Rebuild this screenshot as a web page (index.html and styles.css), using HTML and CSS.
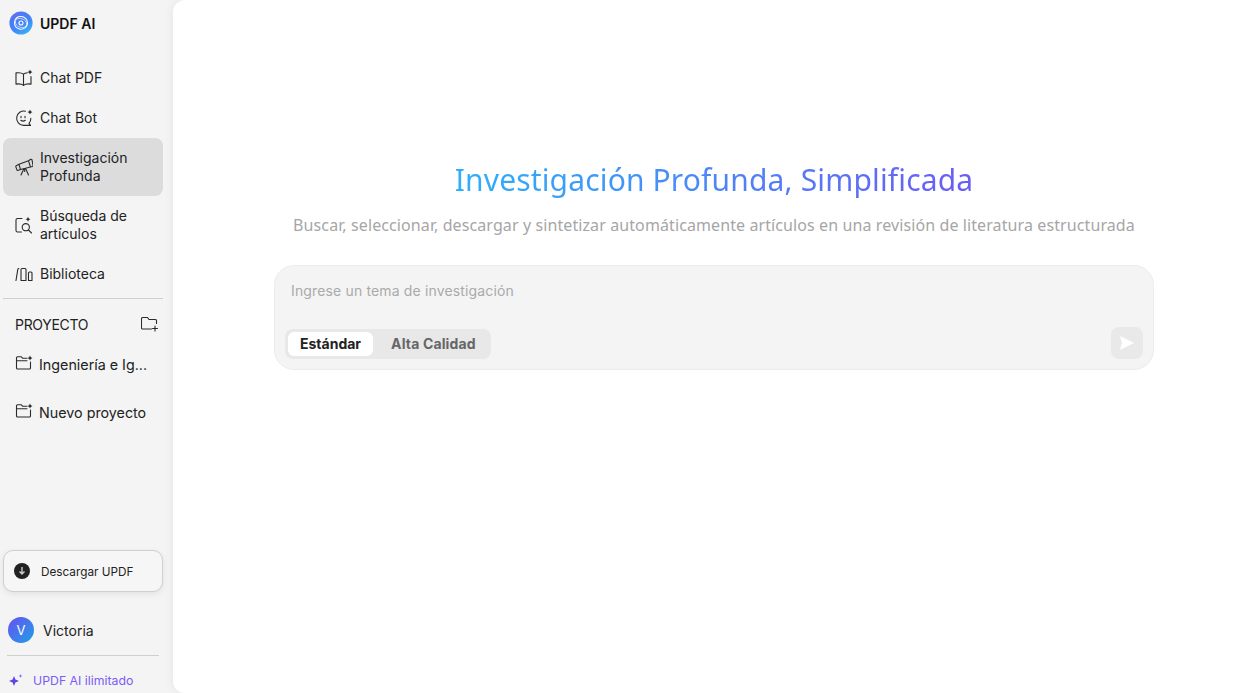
FILE: index.html
```html
<!DOCTYPE html>
<html lang="es">
<head>
<meta charset="utf-8">
<title>UPDF AI</title>
<link rel="stylesheet" href="styles.css">
</head>
<body>
<div class="app">
  <aside class="sidebar">
    <div class="brand">
      <svg class="logo" viewBox="0 0 24 24" width="24" height="24">
        <defs>
          <linearGradient id="lg" x1="0.1" y1="0" x2="0.8" y2="1"><stop offset="0" stop-color="#5d6ff2"/><stop offset="0.6" stop-color="#3f86f6"/><stop offset="1" stop-color="#38b6f5"/></linearGradient>
        </defs>
        <circle class="logo-disc" cx="12" cy="12" r="11.6" fill="url(#lg)"/>
        <path d="M12 5.500c3.600 0 6.500 2.900 6.500 6.500 0 2-1 3.700-2.500 4.900-1.500 1-3.500 1.600-5.500 1.100-3-.7-5-3.300-5-6.500 0-2 .9-3.800 2.500-5 1.200-.9 2.600-1 4-1z" fill="none" stroke="#fff" stroke-width="1.100"/>
        <path d="M7 8.500c2-1.500 7-1.500 9.500 1.500 1.500 2 1.200 4.500 0 6M17 15.500c-2 1.500-7 1.500-9.500-1.500C6 12 6.300 10 7 8.500" fill="none" stroke="#dfe8ff" stroke-width=".8"/>
        <circle cx="12" cy="12" r="2" fill="none" stroke="#fff" stroke-width="1.100"/>
      </svg>
      <span class="brand-name">UPDF AI</span>
    </div>
    <nav class="nav">
      <a class="nav-item">
        <svg class="ico" viewBox="0 0 18 18"><path d="M8.500 5.200C7 3.900 4 3.500 1 3.900v11.200c3-.4 6 0 7.500 1.300M8.500 5.200v11.200M8.500 5.200c1-.9 2.200-1.300 3.800-1.400M8.500 16.400c1.500-1.300 4.500-1.700 7.500-1.300V7.500"/><path class="fill" d="M15 .6l.8 1.700 1.700.8-1.700.8-.8 1.700-.8-1.700-1.700-.8 1.700-.8z"/></svg>
        <span>Chat PDF</span>
      </a>
      <a class="nav-item">
        <svg class="ico" viewBox="0 0 18 18"><path d="M10.500 2.200A7.200 7.200 0 1 0 8.500 16.400H15.500l-1.500-2a7.200 7.200 0 0 0 1.800-5"/><path d="M6 7.200v1.600M10 7.200v1.600M5.800 11.300c1.300.9 3.200.9 4.500 0"/><path class="fill" d="M15 .6l.8 1.700 1.700.8-1.700.8-.8 1.700-.8-1.700-1.700-.8 1.700-.8z"/></svg>
        <span>Chat Bot</span>
      </a>
      <a class="nav-item active">
        <svg class="ico" viewBox="0 0 18 18"><path d="M4 6.300L13.500 2.800l2 6.200L5.500 11.500zM1.200 7.700L4 6.300 5.500 11.500 2.800 12.400a.7.7 0 0 1-.9-.5L.8 8.600a.7.7 0 0 1 .4-.9zM13.500 2.800l2.300-1.500c.6-.2 1 0 1.200.5l1 5.500c.1.600-.1 1-.6 1.200l-1.900.5M9 10.500L6 17M10.500 10.200l3 6.800M9.700 10.500v3"/></svg>
        <span>Investigación Profunda</span>
      </a>
      <a class="nav-item">
        <svg class="ico" viewBox="0 0 18 18"><path d="M7 2.500H2.500A1.500 1.500 0 0 0 1 4v10.500A1.500 1.500 0 0 0 2.500 16H6.500"/><circle cx="10.800" cy="11.200" r="3.600"/><path d="M13.500 14l3 3"/><path class="fill" d="M13 .8l.8 1.700 1.700.8-1.700.8-.8 1.700-.8-1.700-1.700-.8 1.700-.8z"/></svg>
        <span>Búsqueda de artículos</span>
      </a>
      <a class="nav-item">
        <svg class="ico" viewBox="0 0 18 18"><path d="M1 15.500L2.800 4.300c.1-.5.400-.8 1-.8M6 15.500V4.500a1 1 0 0 1 1-1h3a1 1 0 0 1 1 1v11zM13.500 15.500V8a1 1 0 0 1 1-1h1.500a1 1 0 0 1 1 1v7.500z"/></svg>
        <span>Biblioteca</span>
      </a>
    </nav>
    <div class="rule"></div>
    <div class="project-head">
      <span>PROYECTO</span>
      <svg class="ico" viewBox="0 0 18 18"><path d="M15.500 8.500V5.500a1 1 0 0 0-1-1H8L6.500 2.500H1.500a1 1 0 0 0-1 1v9.500a1 1 0 0 0 1 1H10.500"/><path d="M14 11v5M11.500 13.500h5"/></svg>
    </div>
    <a class="project">
      <svg class="ico" viewBox="0 0 18 18"><path d="M12 3.200H7.500L6.300 1.800H2.500a1 1 0 0 0-1 1V13a1 1 0 0 0 1 1h12a1 1 0 0 0 1-1V7M1.500 5.800H12"/><path class="fill" d="M15 .6l.8 1.700 1.700.8-1.700.8-.8 1.700-.8-1.700-1.700-.8 1.700-.8z"/></svg>
      <span>Ingeniería e Ig...</span>
    </a>
    <a class="project">
      <svg class="ico" viewBox="0 0 18 18"><path d="M12 3.200H7.500L6.300 1.800H2.500a1 1 0 0 0-1 1V13a1 1 0 0 0 1 1h12a1 1 0 0 0 1-1V7M1.500 5.800H12"/><path class="fill" d="M15 .6l.8 1.700 1.700.8-1.700.8-.8 1.700-.8-1.700-1.700-.8 1.700-.8z"/></svg>
      <span>Nuevo proyecto</span>
    </a>
    <div class="spacer"></div>
    <button class="download">
      <svg viewBox="0 0 16 16" width="16" height="16"><circle cx="8" cy="8" r="8" fill="#222"/><path d="M8 4v7M5.500 8.500L8 11l2.500-2.500" fill="none" stroke="#ccc" stroke-width="1.400"/></svg>
      <span class="download-label">Descargar UPDF</span>
    </button>
    <div class="user">
      <span class="avatar">V</span>
      <span>Victoria</span>
    </div>
    <div class="rule user-rule"></div>
    <a class="upgrade">
      <svg viewBox="0 0 16 16" width="16" height="16"><path fill="#5a45e8" d="M6 4l1.400 3.600L11 9l-3.600 1.400L6 14l-1.400-3.600L1 9l3.600-1.400z"/><path fill="#8a6df5" d="M12.500 2l.6 1.400 1.400.6-1.400.6-.6 1.400-.6-1.400-1.400-.6 1.400-.6z"/></svg>
      <span>UPDF AI ilimitado</span>
    </a>
  </aside>
  <main class="main">
    <h1 class="title">Investigación Profunda, Simplificada</h1>
    <p class="subtitle">Buscar, seleccionar, descargar y sintetizar automáticamente artículos en una revisión de literatura estructurada</p>
    <section class="composer">
      <div class="placeholder">Ingrese un tema de investigación</div>
      <div class="composer-foot">
        <div class="toggle">
          <span class="tab on">Estándar</span>
          <span class="tab alt">Alta Calidad</span>
        </div>
        <button class="send" aria-label="Enviar">
          <svg viewBox="0 0 16 16" width="16" height="16"><path fill="#fff" d="M1 1l14 7-14 7 2-7z"/></svg>
        </button>
      </div>
    </section>
  </main>
</div>
</body>
</html>
```
FILE: styles.css
```css
* { box-sizing: border-box; }
html, body { margin: 0; height: 100%; overflow: hidden; }
body { font-family: "Inter", "Noto Sans", sans-serif; background: #f4f4f4; color: #222; }
.app { display: flex; height: 693px; }
.sidebar { width: 173px; flex: none; display: flex; flex-direction: column; padding: 0 10px 0 3px; }
.brand { display: flex; align-items: center; gap: 7px; height: 46px; padding-left: 6px; }
.logo { flex: none; }
.logo-disc { filter: blur(.6px); }
.brand-name { font-size: 14px; font-weight: 600; color: #111; }
.nav { display: flex; flex-direction: column; margin-top: 12px; }
.nav-item { display: flex; align-items: center; gap: 7px; padding: 11px 10px 11px 12px; font-size: 14px; line-height: 18px; border-radius: 8px; color: #222; }
.nav-item.active { background: #dcdcdc; }
.ico { width: 18px; height: 18px; flex: none; fill: none; stroke: #2b2b2b; stroke-width: 1.1; stroke-linejoin: round; stroke-linecap: round; }
.ico .fill { fill: #2b2b2b; stroke: none; }
.rule { height: 1px; background: #cfcfcf; margin-top: 4px; flex: none; }
.project-head { display: flex; align-items: center; justify-content: space-between; height: 41px; padding: 9px 4px 0 12px; font-size: 14px; letter-spacing: -.3px; }
.project { display: flex; align-items: center; gap: 6px; height: 48px; padding-left: 12px; font-size: 14.3px; }
.spacer { flex: 1; }
.download { display: flex; align-items: center; gap: 11px; height: 42px; flex: none; padding: 0 10px; border: 1px solid #cfcfcf; border-radius: 10px; background: #f6f6f6; box-shadow: 0 2px 6px rgba(0,0,0,.08); font: 11.75px "Inter", sans-serif; color: #222; }
.download-label { padding-top: 1px; }
.user { display: flex; align-items: center; gap: 9px; height: 50px; flex: none; margin-top: 13px; padding-left: 5px; font-size: 14px; }
.avatar { width: 26px; height: 26px; border-radius: 50%; background: linear-gradient(135deg, #6a4ff0, #1ea0e8); color: #fff; display: flex; align-items: center; justify-content: center; font-size: 13px; }
.user-rule { margin: 0 4px; }
.upgrade { display: flex; align-items: center; gap: 9px; height: 37px; flex: none; padding: 11px 0 0 5px; font-size: 12.3px; color: #7b5cf5; }
.main { flex: 1; background: #fff; border-radius: 12px 0 0 12px; box-shadow: -2px 0 8px rgba(0,0,0,.05); display: flex; flex-direction: column; align-items: center; padding: 158px 0 0 6px; }
.title { margin: 0; font-size: 30px; font-weight: 400; line-height: 44px; letter-spacing: .15px; font-family: "Noto Sans", sans-serif; background: linear-gradient(90deg, #2eb0f8, #6a5cf5); -webkit-background-clip: text; background-clip: text; color: transparent; }
.subtitle { margin: 12px 0 0; font-size: 16px; line-height: 22px; letter-spacing: .1px; color: #a6a6a6; font-family: "Noto Sans", sans-serif; }
.composer { width: 880px; height: 105px; margin-top: 29px; background: #f4f4f4; border: 1px solid #ececec; border-radius: 20px; padding: 15px 10px 10px 10px; display: flex; flex-direction: column; justify-content: space-between; }
.placeholder { font-size: 14px; line-height: 20px; letter-spacing: .15px; color: #aaa; padding-left: 6px; }
.composer-foot { display: flex; align-items: flex-end; justify-content: space-between; }
.toggle { display: flex; background: #e8e8e8; border-radius: 8px; padding: 3px; }
.tab { padding: 0 12px; height: 24px; line-height: 24px; font-size: 14px; font-weight: 700; color: #666; border-radius: 6px; }
.tab.on { background: #fff; color: #222; }
.tab.alt { padding: 0 12px 0 18px; letter-spacing: .15px; }
.send { width: 32px; height: 32px; border: 0; border-radius: 8px; background: #e9e9e9; display: flex; align-items: center; justify-content: center; padding: 0; }
```
